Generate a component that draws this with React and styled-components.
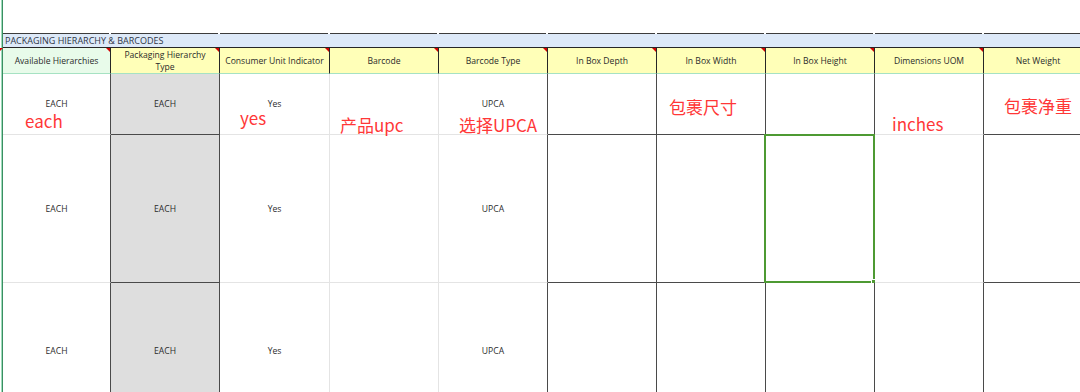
import React from "react";
import styled, { createGlobalStyle, css } from "styled-components";

const GlobalStyle = createGlobalStyle`
  html, body {
    margin: 0;
    padding: 0;
    background: #ffffff;
  }
  body {
    font-family: "Open Sans", "Liberation Sans", sans-serif;
  }
`;

const DARK = "#4a4a4a";
const LIGHT = "#e4e4e4";
const HEAD = "#262626";

const widths = [108, 109, 110, 109, 109, 109, 109, 109, 109, 109];
const gridCols = widths.map(w => `${w}px`).join(" ");

const columns = [
  { title: "Available Hierarchies", tint: "green", right: DARK, bottom: LIGHT, value: "EACH" },
  { title: "Packaging Hierarchy\nType", right: DARK, bottom: DARK, value: "EACH", gray: true },
  { title: "Consumer Unit Indicator", right: LIGHT, bottom: LIGHT, value: "Yes" },
  { title: "Barcode", right: LIGHT, bottom: LIGHT, value: "" },
  { title: "Barcode Type", right: DARK, bottom: LIGHT, value: "UPCA" },
  { title: "In Box Depth", right: DARK, bottom: DARK, value: "" },
  { title: "In Box Width", right: DARK, bottom: DARK, value: "" },
  { title: "In Box Height", right: DARK, bottom: DARK, value: "" },
  { title: "Dimensions UOM", right: DARK, bottom: LIGHT, value: "" },
  { title: "Net Weight", right: DARK, bottom: DARK, value: "", noMark: true },
];

const rowHeights = [61, 148, 136];

const notes = [
  { text: "each", x: 25, y: 112 },
  { text: "yes", x: 240, y: 109 },
  { text: "产品upc", x: 340, y: 116 },
  { text: "选择UPCA", x: 459, y: 116 },
  { text: "包裹尺寸", x: 669, y: 98 },
  { text: "inches", x: 892, y: 115 },
  { text: "包裹净重", x: 1004, y: 97 },
];

const Sheet = styled.div`
  position: relative;
  width: 1080px;
  height: 392px;
  overflow: hidden;
  background: #fff;
`;

const Pane = styled.div`
  margin-left: 2px;
  border-left: 1px solid #3a8f62;
  box-shadow: -1px 0 0 #9fdcbc;
  display: flex;
  flex-direction: column;
`;

const Blank = styled.div`
  height: 33px;
`;

const RuleRow = styled.div`
  display: grid;
  grid-template-columns: ${gridCols};
  height: 1px;
`;

const RuleSeg = styled.div`
  margin-right: 2px;
  background: #3c3c3c;
`;

const Band = styled.div`
  height: 13px;
  background: #dde9f8;
  border-bottom: 1px solid ${HEAD};
  font-size: 9px;
  line-height: 14px;
  color: #2f3646;
  padding-left: 2px;
  white-space: nowrap;
`;

const Grid = styled.div`
  display: grid;
  grid-template-columns: ${gridCols};
`;

const HeadCell = styled.div`
  position: relative;
  box-sizing: border-box;
  height: 26px;
  background: ${p => (p.$tint === "green" ? "#e8fbea" : "#ffffb8")};
  border-right: 1px solid ${HEAD};
  border-bottom: 1px solid #a6e2c3;
  display: flex;
  align-items: center;
  justify-content: center;
  text-align: center;
  font-size: 8.6px;
  line-height: 12px;
  color: #2b2b2b;
  white-space: pre-line;
  padding-top: 1px;

  ${p =>
    !p.$noMark &&
    css`
      &::after {
        content: "";
        position: absolute;
        top: 0;
        right: 0;
        border-style: solid;
        border-width: 0 4px 4px 0;
        border-color: transparent #d40000 transparent transparent;
      }
    `}

  ${p =>
    p.$first &&
    css`
      &::before {
        content: "";
        position: absolute;
        top: 0;
        left: -3px;
        border-style: solid;
        border-width: 3px 3px 0 0;
        border-color: #d40000 transparent transparent transparent;
      }
    `}
`;

const Cell = styled.div`
  position: relative;
  box-sizing: border-box;
  height: ${p => p.$h}px;
  background: ${p => (p.$gray ? "#dedede" : "#fff")};
  border-right: 1px solid ${p => p.$right};
  border-bottom: 1px solid ${p => p.$bottom};
  display: flex;
  align-items: center;
  justify-content: center;
  font-size: 8.6px;
  line-height: 10px;
  color: #2b2b2b;
`;

const Selection = styled.div`
  position: absolute;
  top: -1px;
  left: -2px;
  right: -1px;
  bottom: -1px;
  border: 2px solid #4e9a33;
  pointer-events: none;

  &::after {
    content: "";
    position: absolute;
    right: -3px;
    bottom: -3px;
    width: 3px;
    height: 3px;
    background: #4e9a33;
    border: 1px solid #fff;
  }
`;

const Note = styled.div`
  position: absolute;
  font-family: "Noto Sans CJK SC", "Noto Sans", sans-serif;
  font-size: 17px;
  line-height: 17px;
  color: #ff3737;
  white-space: nowrap;
`;

export default function App() {
  return (
    <>
      <GlobalStyle />
      <Sheet>
        <Pane>
          <Blank />
          <RuleRow>
            {widths.map((w, i) => (
              <RuleSeg key={i} />
            ))}
          </RuleRow>
          <Band>PACKAGING HIERARCHY &amp; BARCODES</Band>
          <Grid>
            {columns.map((c, i) => (
              <HeadCell key={i} $tint={c.tint} $noMark={c.noMark} $first={i === 0}>
                {c.title}
              </HeadCell>
            ))}
            {rowHeights.map((h, r) =>
              columns.map((c, i) => (
                <Cell
                  key={`${r}-${i}`}
                  $h={h}
                  $gray={c.gray}
                  $right={c.right}
                  $bottom={c.bottom}
                >
                  {c.value}
                  {r === 1 && i === 7 && <Selection />}
                </Cell>
              ))
            )}
          </Grid>
        </Pane>
        {notes.map((n, i) => (
          <Note key={i} style={{ left: n.x, top: n.y }}>
            {n.text}
          </Note>
        ))}
      </Sheet>
    </>
  );
}
